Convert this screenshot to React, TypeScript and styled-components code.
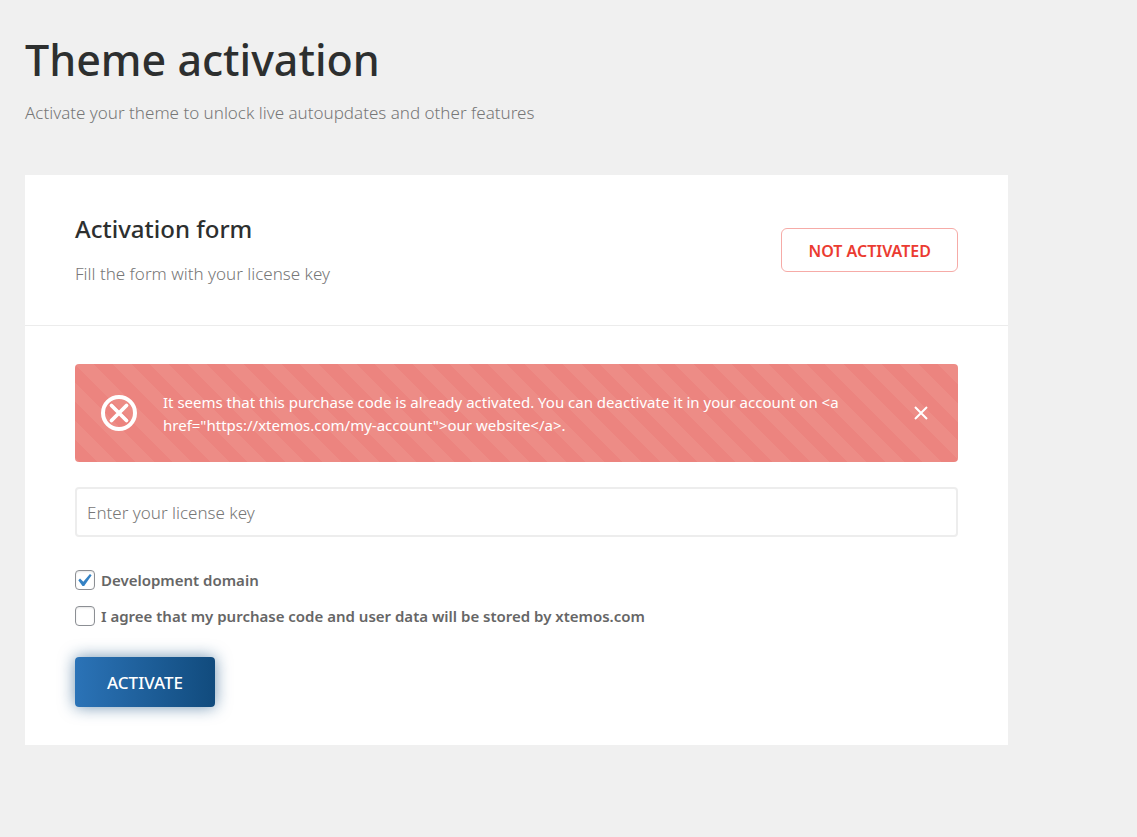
import React, { useState } from "react";
import styled, { createGlobalStyle } from "styled-components";

const GlobalStyle = createGlobalStyle`
  *, *::before, *::after { box-sizing: border-box; }
  body {
    margin: 0;
    background: #f0f0f0;
    color: #2d2f2f;
    font-family: "Segoe UI", "Noto Sans", "Open Sans", sans-serif;
  }
`;

const Page = styled.main`
  padding: 30px 129px 48px 25px;
`;

const PageTitle = styled.h1`
  margin: 0 0 9px;
  font-size: 43px;
  line-height: 60px;
  font-weight: 500;
`;

const Lead = styled.p`
  margin: 0;
  font-size: 17px;
  line-height: 28px;
  font-weight: 300;
  color: #777;
`;

const Card = styled.section`
  margin-top: 48px;
  background: #fff;
`;

const CardHeader = styled.header`
  display: flex;
  align-items: center;
  justify-content: space-between;
  padding: 37px 50px;
  border-bottom: 1px solid #ececec;
`;

const CardTitle = styled.h2`
  margin: 0 0 14px;
  font-size: 24px;
  line-height: 34px;
  font-weight: 500;
`;

const Status = styled.span`
  padding: 2px 26px 0;
  border: 1px solid #f6aba7;
  border-radius: 6px;
  font-size: 16px;
  line-height: 40px;
  font-weight: 600;
  white-space: nowrap;
  text-transform: uppercase;
  color: #eb3b31;
`;

const Form = styled.form`
  padding: 38px 50px;
`;

const Notice = styled.div`
  display: flex;
  align-items: center;
  padding: 25px 26px;
  border-radius: 4px;
  color: #fff;
  background: repeating-linear-gradient(45deg, #ed8c86 0 12.5%, #ec847f 12.5% 25%) 0 0 / 75px 75px;
`;

const NoticeIcon = styled.svg`
  flex: none;
  width: 36px;
  height: 36px;
`;

const NoticeText = styled.p`
  flex: 1;
  margin: 0 52px 0 26px;
  padding-top: 2px;
  font-size: 15px;
  line-height: 23px;
`;

const CloseButton = styled.button`
  flex: none;
  display: flex;
  margin-right: 3px;
  padding: 0;
  border: 0;
  background: none;
  color: inherit;
  cursor: pointer;
`;

const KeyInput = styled.input`
  display: block;
  width: 100%;
  height: 50px;
  margin: 25px 0 32px;
  padding: 0 10px;
  border: 2px solid #ededed;
  border-radius: 4px;
  background: #fff;
  font: 300 17px "Segoe UI", "Noto Sans", "Open Sans", sans-serif;
  color: #444;
  &::placeholder { color: #777; opacity: 1; }
`;

const Option = styled.label`
  display: flex;
  align-items: center;
  gap: 6px;
  height: 22px;
  margin-bottom: 14px;
  font-size: 15px;
  font-weight: 600;
  color: #666;
`;

const CheckBoxFrame = styled.span`
  display: grid;
  width: 20px;
  height: 20px;
  & > * { grid-area: 1 / 1; }
`;

const CheckBox = styled.input`
  appearance: none;
  width: 20px;
  height: 20px;
  margin: 0;
  border: 1px solid #8c8f94;
  border-radius: 4px;
  background: #fff;
  box-shadow: inset 0 1px 2px rgba(0, 0, 0, 0.1);
  & + svg { visibility: hidden; }
  &:checked + svg { visibility: visible; }
`;

const Tick = styled.svg`
  width: 20px;
  height: 20px;
  pointer-events: none;
`;

const SubmitButton = styled.button`
  display: block;
  margin-top: 30px;
  height: 50px;
  padding: 0 32px;
  border: 0;
  border-radius: 4px;
  background: linear-gradient(90deg, #2b73b7, #114b7d);
  box-shadow: 0 0 16px rgba(17, 75, 125, 0.6);
  color: #fff;
  font: 500 17px "Segoe UI", "Noto Sans", "Open Sans", sans-serif;
  text-transform: uppercase;
  cursor: pointer;
`;

type CheckFieldProps = {
  label: string;
  checked: boolean;
  onChange: (checked: boolean) => void;
};

function CheckField({ label, checked, onChange }: CheckFieldProps) {
  return (
    <Option>
      <CheckBoxFrame>
        <CheckBox type="checkbox" checked={checked} onChange={(e) => onChange(e.target.checked)} />
        <Tick viewBox="3.2 1.7 15.6 15.6" aria-hidden="true">
          <path d="M14.83 4.89l1.34.94-5.81 8.38H9.02L5.78 9.67l1.34-1.25 2.57 2.4z" fill="#3582c4" />
        </Tick>
      </CheckBoxFrame>
      {label}
    </Option>
  );
}

export default function App() {
  const [devDomain, setDevDomain] = useState(true);
  const [agree, setAgree] = useState(false);
  const [showNotice, setShowNotice] = useState(true);

  return (
    <>
      <GlobalStyle />
      <Page>
        <PageTitle>Theme activation</PageTitle>
        <Lead>Activate your theme to unlock live autoupdates and other features</Lead>
        <Card>
          <CardHeader>
            <div>
              <CardTitle>Activation form</CardTitle>
              <Lead>Fill the form with your license key</Lead>
            </div>
            <Status>Not activated</Status>
          </CardHeader>
          <Form onSubmit={(e) => e.preventDefault()}>
            {showNotice && (
              <Notice role="alert">
                <NoticeIcon viewBox="0 0 36 36" fill="none" stroke="currentColor" aria-hidden="true">
                  <circle cx="18" cy="18" r="16" strokeWidth="4" />
                  <path d="M10.5 10.5 25.5 25.5M25.5 10.5 10.5 25.5" strokeWidth="3.8" strokeLinecap="round" />
                </NoticeIcon>
                <NoticeText>
                  {'It seems that this purchase code is already activated. You can deactivate it in your account on <a href="https://xtemos.com/my-account">our website</a>.'}
                </NoticeText>
                <CloseButton type="button" aria-label="Dismiss" onClick={() => setShowNotice(false)}>
                  <svg width="16" height="16" viewBox="0 0 16 16" fill="none" stroke="currentColor" strokeWidth="2" aria-hidden="true">
                    <path d="M2 2 14 14M14 2 2 14" />
                  </svg>
                </CloseButton>
              </Notice>
            )}
            <KeyInput type="text" aria-label="License key" placeholder="Enter your license key" />
            <CheckField label="Development domain" checked={devDomain} onChange={setDevDomain} />
            <CheckField
              label="I agree that my purchase code and user data will be stored by xtemos.com"
              checked={agree}
              onChange={setAgree}
            />
            <SubmitButton type="submit">Activate</SubmitButton>
          </Form>
        </Card>
      </Page>
    </>
  );
}
